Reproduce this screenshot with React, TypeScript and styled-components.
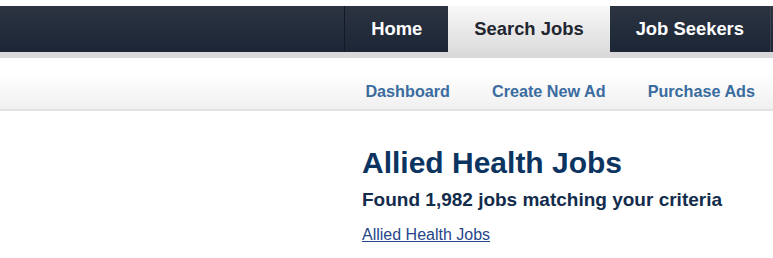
import styled, { createGlobalStyle } from 'styled-components';

const GlobalStyle = createGlobalStyle`
  html, body {
    margin: 0;
    padding: 0;
    background: #ffffff;
    font-family: Arial, "Liberation Sans", Helvetica, sans-serif;
  }
  ul { margin: 0; padding: 0; list-style: none; }
`;

const Page = styled.div`
  width: 773px;
  padding-top: 6px;
`;

const TopBar = styled.div`
  height: 46px;
  background: linear-gradient(#2c3441, #1c2636);
  border-bottom: 6px solid #dad8db;
  display: flex;
  justify-content: flex-end;
`;

const MainNav = styled.ul`
  display: flex;
  height: 100%;
  margin-right: 2px !important;
  border-left: 1px solid #141a25;
  border-right: 1px solid #3a414c;
`;

const MainItem = styled.li<{ $active?: boolean }>`
  display: flex;
  align-items: center;
  padding: 0 26px 0 26px;
  font-size: 18.4px;
  font-weight: bold;
  color: ${({ $active }) => ($active ? '#1f2630' : '#ffffff')};
  background: ${({ $active }) =>
    $active ? 'linear-gradient(#f8f8f8, #dcdcdc)' : 'transparent'};
`;

const SubBar = styled.div`
  height: 51px;
  background: linear-gradient(#ffffff 0%, #ffffff 30%, #f0f0f0 100%);
  border-bottom: 2px solid #e2e2e2;
  display: flex;
  justify-content: flex-end;
  align-items: center;
  padding-right: 18px;
`;

const SubNav = styled.ul`
  display: flex;
  gap: 42px;
  padding-top: 16px !important;
`;

const SubItem = styled.li`
  font-size: 16.2px;
  font-weight: bold;
  color: #3a6c9f;
`;

const Body = styled.div`
  display: grid;
  grid-template-columns: 362px 1fr;
`;

const Content = styled.div`
  padding-top: 35px;
`;

const Title = styled.h1`
  margin: 0;
  font-size: 30px;
  line-height: 34px;
  font-weight: bold;
  color: #0c3461;
`;

const Found = styled.h2`
  margin: 9px 0 0;
  font-size: 19px;
  line-height: 22px;
  font-weight: bold;
  color: #132c4c;
`;

const Crumb = styled.a`
  display: inline-block;
  margin-top: 15px;
  font-size: 16px;
  color: #25468a;
  text-decoration: underline;
`;

const mainLinks = [
  { text: 'Home' },
  { text: 'Search Jobs', active: true },
  { text: 'Job Seekers' },
];

const subLinks = ['Dashboard', 'Create New Ad', 'Purchase Ads'];

export default function App() {
  return (
    <Page>
      <GlobalStyle />
      <TopBar>
        <MainNav>
          {mainLinks.map((l) => (
            <MainItem key={l.text} $active={l.active}>
              {l.text}
            </MainItem>
          ))}
        </MainNav>
      </TopBar>
      <SubBar>
        <SubNav>
          {subLinks.map((s) => (
            <SubItem key={s}>{s}</SubItem>
          ))}
        </SubNav>
      </SubBar>
      <Body>
        <div />
        <Content>
          <Title>Allied Health Jobs</Title>
          <Found>Found 1,982 jobs matching your criteria</Found>
          <Crumb href="#">Allied Health Jobs</Crumb>
        </Content>
      </Body>
    </Page>
  );
}
